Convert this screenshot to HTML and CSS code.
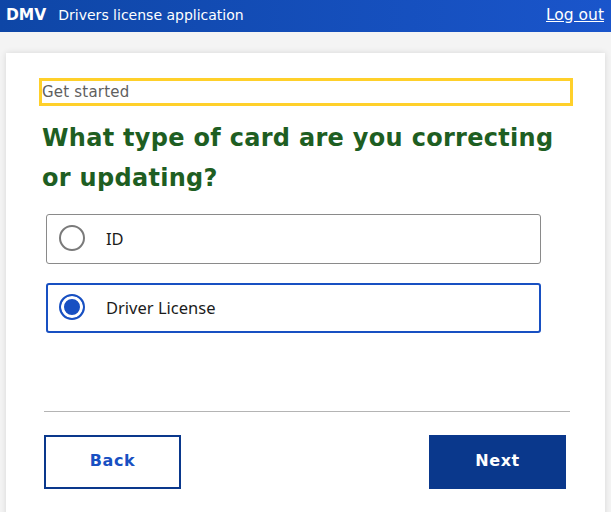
FILE: index.html
```html
<!DOCTYPE html>
<html lang="en">
<head>
    <meta charset="UTF-8">
    <meta name="viewport" content="width=device-width, initial-scale=1.0">
    <title>DMV - Drivers license application</title>
    <link rel="stylesheet" href="styles.css">
</head>
<body>
    <header class="topbar">
        <div class="brand">
            <span class="brand-name">DMV</span>
            <span class="brand-app">Drivers license application</span>
        </div>
        <a class="logout" href="#">Log out</a>
    </header>

    <main class="page">
        <div class="card">
            <div class="step-label" tabindex="-1">Get started</div>
            <h1 class="question">What type of card are you correcting or updating?</h1>

            <div class="options">
                <label class="option">
                    <input type="radio" name="cardType" value="id">
                    <span class="radio"></span>
                    <span class="option-text">ID</span>
                </label>
                <label class="option selected">
                    <input type="radio" name="cardType" value="dl" checked>
                    <span class="radio"></span>
                    <span class="option-text">Driver License</span>
                </label>
            </div>

            <hr class="divider">

            <div class="actions">
                <button class="btn btn-outline">Back</button>
                <button class="btn btn-primary">Next</button>
            </div>
        </div>
    </main>
</body>
</html>
```

FILE: styles.css
```css
* {
    box-sizing: border-box;
}

body {
    font-family: "DejaVu Sans", sans-serif;
    margin: 0;
    padding: 0;
    background-color: #f4f4f4;
    height: 512px;
    overflow: hidden;
}

.topbar {
    height: 32px;
    display: flex;
    align-items: center;
    justify-content: space-between;
    padding: 0 7px 3px 6px;
    background: linear-gradient(90deg, #0e46a6, #1a55cb);
    color: white;
}

.brand {
    display: flex;
    align-items: baseline;
}

.brand-name {
    font-weight: bold;
    font-size: 15.5px;
    margin-right: 12px;
}

.brand-app {
    font-size: 14px;
}

.logout {
    color: white;
    font-size: 15.5px;
    text-decoration: underline;
}

.page {
    padding: 21px 6px 0;
}

.card {
    background: white;
    min-height: 470px;
    padding: 28px 35px 20px 36px;
    box-shadow: 0 0 6px rgba(0, 0, 0, 0.12);
}

.step-label {
    font-size: 15px;
    color: #5f5f5f;
    line-height: 22px;
    letter-spacing: 0.2px;
    outline: 3px solid #ffd02a;
}

.question {
    margin: 15px 0 16px;
    font-size: 24px;
    line-height: 40px;
    letter-spacing: 0.3px;
    color: #1e5e22;
}

.options {
    margin-left: 4px;
    width: 495px;
}

.option {
    display: flex;
    align-items: center;
    height: 50px;
    padding: 0 12px 2px;
    border: 1px solid #8a8a8a;
    border-radius: 3px;
    margin-bottom: 19px;
    font-family: "Noto Sans", sans-serif;
    font-size: 16.5px;
    color: #1b1b1b;
    cursor: pointer;
}

.option input {
    display: none;
}

.radio {
    width: 26px;
    height: 26px;
    border: 2px solid #7a7a7a;
    border-radius: 50%;
    margin-right: 21px;
    flex-shrink: 0;
}

.option.selected {
    border: 2px solid #1850c2;
    padding: 0 11px 2px;
}

.option.selected .radio {
    border-color: #1850c2;
    background: #1850c2;
    box-shadow: inset 0 0 0 3px white;
}

.divider {
    border: none;
    border-top: 1px solid #b4b4b4;
    margin: 78px 0 23px 2px;
}

.actions {
    display: flex;
    justify-content: space-between;
    padding: 0 4px 0 2px;
}

.btn {
    width: 137px;
    height: 54px;
    padding-bottom: 4px;
    font-family: "DejaVu Sans", sans-serif;
    font-weight: bold;
    font-size: 16px;
    letter-spacing: 0.6px;
    cursor: pointer;
}

.btn-outline {
    background: white;
    color: #1850c2;
    border: 2px solid #0a388c;
}

.btn-primary {
    background: #0a388c;
    color: white;
    border: none;
}
```
